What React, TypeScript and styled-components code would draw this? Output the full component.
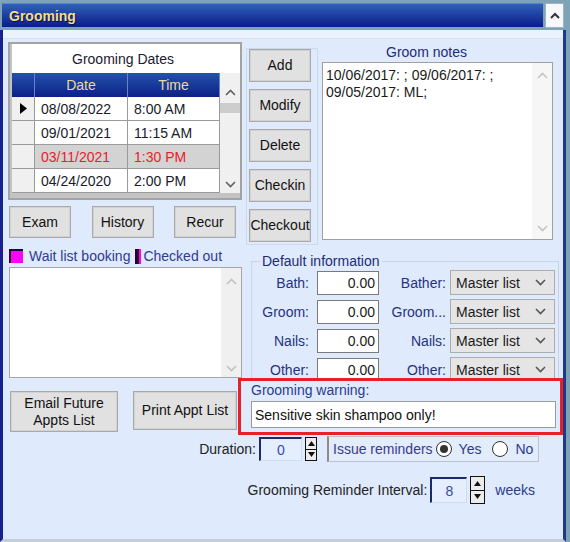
import styled, { createGlobalStyle } from "styled-components";

const GlobalStyle = createGlobalStyle`
  html, body {
    margin: 0;
    padding: 0;
    background: #7ea3b7;
  }
  body {
    font-family: "Liberation Sans", Arial, sans-serif;
    font-size: 14px;
    color: #1a1a1a;
  }
  * {
    box-sizing: border-box;
  }
`;

const NAVY = "#25337f";

const Window = styled.div`
  width: 570px;
  height: 542px;
  background: #7ea3b7;
  padding-top: 3px;
  display: flex;
  flex-direction: column;
  overflow: hidden;
`;

const TitleRow = styled.div`
  display: flex;
  height: 25px;
`;

const TitleBar = styled.div`
  width: 541px;
  height: 24px;
  margin-left: 2px;
  padding-left: 7px;
  display: flex;
  align-items: center;
  background: linear-gradient(#2f62b8, #0b1c8a);
  border-top: 1px solid #5a86cc;
  color: #f2de8e;
  font-weight: bold;
  font-size: 14px;
  text-shadow: 1px 1px 0 #0a1040;
`;

const CollapseButton = styled.div`
  width: 19px;
  height: 25px;
  margin-left: 2px;
  background: #f6f8fb;
  border: 1px solid #9fb3c4;
  display: flex;
  align-items: center;
  justify-content: center;
`;

const Body = styled.div`
  flex: 1;
  margin-top: 2px;
  margin-right: 4px;
  background: #dfeafc;
  border-left: 3px solid #16228c;
  border-right: 3px solid #1d3a8a;
  border-bottom: 3px solid #c5cdd9;
  display: flex;
  flex-direction: column;
`;

const TopStrip = styled.div`
  height: 9px;
  background: #eaf2fd;
  border-bottom: 1px solid #d6e2f2;
`;

const Upper = styled.div`
  display: flex;
  gap: 4px;
  padding: 3px 0 0 5px;
`;

const LeftCol = styled.div`
  width: 234px;
  display: flex;
  flex-direction: column;
`;

const RightCol = styled.div`
  flex: 1;
  display: flex;
  flex-direction: column;
`;

/* ---------- dates grid ---------- */

const GridFrame = styled.div`
  width: 234px;
  height: 158px;
  border: 2px solid #a3a3a3;
  background: #c3c3c3;
  padding-left: 2px;
`;

const GridTitle = styled.div`
  height: 29px;
  background: #fff;
  color: #1b2030;
  display: flex;
  align-items: center;
  justify-content: center;
  padding-right: 6px;
`;

const GridBody = styled.div`
  display: flex;
`;

const GridTable = styled.div`
  width: 208px;
  display: grid;
  grid-template-columns: 23px 93px 92px;
  grid-auto-rows: 24px;
`;

const HeadCell = styled.div`
  background: linear-gradient(#2452aa, #0c2088);
  border-right: 1px solid #6a84c0;
  color: #ead9a0;
  display: flex;
  align-items: center;
  justify-content: center;
  &:last-child {
    border-right: none;
  }
`;

const RowHeadCell = styled.div`
  background: #f0f0f0;
  border-right: 1px solid #9a9a9a;
  border-bottom: 1px solid #9a9a9a;
  display: flex;
  align-items: center;
  justify-content: center;
`;

const Cell = styled.div<{ $sel?: boolean }>`
  background: ${(p) => (p.$sel ? "#d3d3d3" : "#fff")};
  color: ${(p) => (p.$sel ? "#e8202a" : "#1a1a2a")};
  border-right: 1px solid #9a9a9a;
  border-bottom: 1px solid #9a9a9a;
  display: flex;
  align-items: center;
  padding-left: 6px;
`;

/* ---------- scrollbars ---------- */

const Scrollbar = styled.div<{ $w: number; $h: number; $pt: number; $pb: number; $bg: string }>`
  width: ${(p) => p.$w}px;
  height: ${(p) => p.$h}px;
  background: ${(p) => p.$bg};
  padding: ${(p) => p.$pt}px 0 ${(p) => p.$pb}px;
  display: flex;
  flex-direction: column;
`;

const ScrollArrow = styled.div`
  height: 17px;
  display: flex;
  align-items: center;
  justify-content: center;
`;

const Thumb = styled.div`
  height: 10px;
  margin-top: 2px;
  background: #cdcdcd;
`;

const Spacer = styled.div`
  flex: 1;
`;

function Chevron({ up, color }: { up?: boolean; color: string }) {
  return (
    <svg width="11" height="7" viewBox="0 0 11 7">
      <polyline
        points={up ? "1,6 5.5,1.5 10,6" : "1,1 5.5,5.5 10,1"}
        fill="none"
        stroke={color}
        strokeWidth="1.6"
      />
    </svg>
  );
}

function Scroll({
  w,
  h,
  pt,
  pb,
  bg,
  color,
  thumb,
}: {
  w: number;
  h: number;
  pt: number;
  pb: number;
  bg: string;
  color: string;
  thumb?: boolean;
}) {
  return (
    <Scrollbar $w={w} $h={h} $pt={pt} $pb={pb} $bg={bg}>
      <ScrollArrow>
        <Chevron up color={color} />
      </ScrollArrow>
      {thumb && <Thumb />}
      <Spacer />
      <ScrollArrow>
        <Chevron color={color} />
      </ScrollArrow>
    </Scrollbar>
  );
}

/* ---------- buttons ---------- */

const Button = styled.div<{ $w: number; $h: number }>`
  width: ${(p) => p.$w}px;
  height: ${(p) => p.$h}px;
  background: #e1e1e1;
  border: 1px solid #a9a9a9;
  box-shadow: inset 0 0 0 1px #d2d2d2;
  color: #111;
  display: flex;
  align-items: center;
  justify-content: center;
  text-align: center;
  line-height: 17px;
  flex-shrink: 0;
`;

const ExamRow = styled.div`
  margin-top: 6px;
  padding: 0 6px 0 1px;
  display: flex;
  justify-content: space-between;
`;

const LegendRow = styled.div`
  margin-top: 11px;
  height: 14px;
  padding-left: 1px;
  display: flex;
  align-items: center;
  color: #2f3a92;
`;

const WaitSwatch = styled.div`
  width: 14px;
  height: 14px;
  background: #ff00ff;
  border-top: 2px solid #2a002a;
  border-left: 2px solid #2a002a;
  margin-right: 6px;
`;

const OutSwatch = styled.div`
  width: 6px;
  height: 15px;
  background: #2a0030;
  border-right: 2px solid #ff00ff;
  margin: 0 2px 0 5px;
`;

const WaitList = styled.div`
  margin: 4px 0 0 1px;
  width: 233px;
  height: 111px;
  background: #fff;
  border: 1px solid #a6a6a6;
  display: flex;
  justify-content: flex-end;
`;

/* ---------- right side ---------- */

const TopRight = styled.div`
  display: flex;
  align-items: flex-start;
`;

const ButtonGroup = styled.div`
  width: 72px;
  margin-top: 6px;
  border: 1px solid #cbd9ec;
  padding: 0 2px 2px;
  display: flex;
  flex-direction: column;
  gap: 7px;
`;

const NotesCol = styled.div`
  width: 231px;
  margin-left: 4px;
`;

const NotesLabel = styled.div`
  height: 20px;
  line-height: 20px;
  text-align: center;
  padding-right: 22px;
  color: #1d2c78;
`;

const NotesBox = styled.div`
  height: 178px;
  background: #fff;
  border: 1px solid #a0a0a0;
  display: flex;
`;

const NotesText = styled.div`
  flex: 1;
  padding: 4px 3px;
  line-height: 17px;
  color: #1a1a1a;
`;

/* the last row runs under the warning box, as in the original form */
const DefaultGroup = styled.fieldset`
  margin: 9px 0 -7px 5px;
  width: 308px;
  padding: 0;
  border: 1px solid #c9d5e6;
  min-width: 0;
`;

const GroupLegend = styled.legend`
  margin-left: 8px;
  padding: 0 2px;
  line-height: 14px;
  color: #1d2c78;
`;

const InfoGrid = styled.div`
  display: grid;
  grid-template-columns: 65px 62px 71px 105px;
  grid-auto-rows: 29px;
  align-items: center;
`;

const InfoLabel = styled.div<{ $pr: number }>`
  text-align: right;
  padding-right: ${(p) => p.$pr}px;
  color: ${NAVY};
  white-space: nowrap;
`;

const NumberInput = styled.div`
  height: 24px;
  background: #fff;
  border: 1px solid #7a7a7a;
  display: flex;
  align-items: center;
  justify-content: flex-end;
  padding-right: 3px;
  color: #1a1a1a;
`;

const Combo = styled.div`
  height: 25px;
  background: #e5e5e5;
  border: 1px solid #acacac;
  display: flex;
  align-items: center;
  justify-content: space-between;
  padding: 0 8px 0 5px;
  color: #1a1a1a;
`;

/* ---------- bottom ---------- */

const BottomRow = styled.div`
  display: flex;
  align-items: flex-start;
  padding-left: 7px;
`;

const WarningBox = styled.div`
  position: relative;
  width: 325px;
  height: 57px;
  margin-left: 1px;
  background: #dfeafc;
  border: 3px solid #e8202a;
  padding: 2px 0 0 10px;
`;

const WarningLabel = styled.div`
  line-height: 14px;
  margin-bottom: 4px;
  color: #2c3c8c;
`;

const WarningInput = styled.div`
  width: 305px;
  height: 27px;
  background: #fff;
  border: 1px solid #9a9a9a;
  display: flex;
  align-items: center;
  padding-left: 3px;
  color: #111;
`;

const ControlRow = styled.div<{ $mt: number; $h: number; $pr: number }>`
  margin-top: ${(p) => p.$mt}px;
  height: ${(p) => p.$h}px;
  padding-right: ${(p) => p.$pr}px;
  display: flex;
  align-items: center;
  justify-content: flex-end;
`;

const PlainLabel = styled.div`
  color: #222;
`;

const SpinBox = styled.div<{ $w: number; $h: number }>`
  width: ${(p) => p.$w}px;
  height: ${(p) => p.$h}px;
  margin-left: 3px;
  background: #e4eefd;
  border-top: 2px solid #1a2a6a;
  border-left: 2px solid #1a2a6a;
  border-right: 1px solid #cfdcef;
  border-bottom: 1px solid #cfdcef;
  display: flex;
  align-items: center;
  justify-content: center;
  color: #3a48a8;
`;

const Spinner = styled.div<{ $w: number; $h: number }>`
  width: ${(p) => p.$w}px;
  height: ${(p) => p.$h}px;
  margin-left: 3px;
  border: 1px solid #111;
  background: #ececec;
  display: flex;
  flex-direction: column;
`;

const SpinHalf = styled.div`
  flex: 1;
  display: flex;
  align-items: center;
  justify-content: center;
  & + & {
    border-top: 1px solid #111;
  }
`;

const ReminderGroup = styled.div`
  width: 212px;
  height: 26px;
  margin-left: 10px;
  background: #e2ecfb;
  border: 1px solid #b9c2cf;
  border-left: 2px solid #8c8c8c;
  display: flex;
  align-items: center;
  padding-left: 4px;
  color: #3a3a8e;
`;

const Radio = styled.div`
  width: 16px;
  height: 16px;
  border-radius: 50%;
  border: 1px solid #333;
  background: #fff;
  margin: 0 7px 0 3px;
  display: flex;
  align-items: center;
  justify-content: center;
`;

const RadioDot = styled.div`
  width: 8px;
  height: 8px;
  border-radius: 50%;
  background: #333;
`;

const RadioText = styled.span<{ $mr: number }>`
  margin-right: ${(p) => p.$mr}px;
  color: #2c3c8c;
`;

const Weeks = styled.div`
  margin-left: 10px;
  color: #2c3c8c;
`;

function Spin({ w, h }: { w: number; h: number }) {
  return (
    <Spinner $w={w} $h={h}>
      <SpinHalf>
        <svg width="7" height="5" viewBox="0 0 7 5">
          <polygon points="0,5 3.5,0 7,5" fill="#111" />
        </svg>
      </SpinHalf>
      <SpinHalf>
        <svg width="7" height="5" viewBox="0 0 7 5">
          <polygon points="0,0 3.5,5 7,0" fill="#111" />
        </svg>
      </SpinHalf>
    </Spinner>
  );
}

const rows = [
  { date: "08/08/2022", time: "8:00 AM", current: true },
  { date: "09/01/2021", time: "11:15 AM" },
  { date: "03/11/2021", time: "1:30 PM", sel: true },
  { date: "04/24/2020", time: "2:00 PM" },
];

const info = [
  { a: "Bath:", b: "Bather:" },
  { a: "Groom:", b: "Groom..." },
  { a: "Nails:", b: "Nails:" },
  { a: "Other:", b: "Other:" },
];

export default function App() {
  return (
    <>
      <GlobalStyle />
      <Window>
        <TitleRow>
          <TitleBar>Grooming</TitleBar>
          <CollapseButton>
            <svg width="10" height="7" viewBox="0 0 10 7">
              <polyline points="1,6 5,2 9,6" fill="none" stroke="#333" strokeWidth="2" />
            </svg>
          </CollapseButton>
        </TitleRow>
        <Body>
          <TopStrip />
          <Upper>
            <LeftCol>
              <GridFrame>
                <GridTitle>Grooming Dates</GridTitle>
                <GridBody>
                  <GridTable>
                    <HeadCell />
                    <HeadCell>Date</HeadCell>
                    <HeadCell>Time</HeadCell>
                    {rows.map((r) => (
                      <>
                        <RowHeadCell key={r.date + "h"}>
                          {r.current && (
                            <svg width="7" height="11" viewBox="0 0 7 11">
                              <polygon points="0,0 7,5.5 0,11" fill="#000" />
                            </svg>
                          )}
                        </RowHeadCell>
                        <Cell key={r.date} $sel={r.sel}>
                          {r.date}
                        </Cell>
                        <Cell key={r.date + "t"} $sel={r.sel}>
                          {r.time}
                        </Cell>
                      </>
                    ))}
                  </GridTable>
                  <Scroll w={20} h={120} pt={11} pb={0} bg="#f0f0f0" color="#606060" thumb />
                </GridBody>
              </GridFrame>
              <ExamRow>
                <Button $w={62} $h={32}>Exam</Button>
                <Button $w={62} $h={32}>History</Button>
                <Button $w={62} $h={32}>Recur</Button>
              </ExamRow>
              <LegendRow>
                <WaitSwatch />
                Wait list booking
                <OutSwatch />
                Checked out
              </LegendRow>
              <WaitList>
                <Scroll w={20} h={109} pt={5} pb={0} bg="#f0f0f0" color="#c2c2c2" />
              </WaitList>
            </LeftCol>
            <RightCol>
              <TopRight>
                <ButtonGroup>
                  <Button $w={62} $h={33}>Add</Button>
                  <Button $w={62} $h={33}>Modify</Button>
                  <Button $w={62} $h={33}>Delete</Button>
                  <Button $w={62} $h={33}>Checkin</Button>
                  <Button $w={62} $h={33}>Checkout</Button>
                </ButtonGroup>
                <NotesCol>
                  <NotesLabel>Groom notes</NotesLabel>
                  <NotesBox>
                    <NotesText>
                      10/06/2017: ; 09/06/2017: ;
                      <br />
                      09/05/2017: ML;
                    </NotesText>
                    <Scroll w={20} h={176} pt={4} pb={2} bg="#f6f6f6" color="#c4c4c4" />
                  </NotesBox>
                </NotesCol>
              </TopRight>
              <DefaultGroup>
                <GroupLegend>Default information</GroupLegend>
                <InfoGrid>
                  {info.map((r) => (
                    <>
                      <InfoLabel key={r.a} $pr={8}>
                        {r.a}
                      </InfoLabel>
                      <NumberInput key={r.a + "i"}>0.00</NumberInput>
                      <InfoLabel key={r.b + "l"} $pr={4}>
                        {r.b}
                      </InfoLabel>
                      <Combo key={r.b + "c"}>
                        Master list
                        <Chevron color="#555" />
                      </Combo>
                    </>
                  ))}
                </InfoGrid>
              </DefaultGroup>
            </RightCol>
          </Upper>
          <BottomRow>
            <Button $w={108} $h={41} style={{ marginTop: 13 }}>
              Email Future
              <br />
              Appts List
            </Button>
            <Button $w={104} $h={39} style={{ marginTop: 13, marginLeft: 15 }}>
              Print Appt List
            </Button>
            <WarningBox>
              <WarningLabel>Grooming warning:</WarningLabel>
              <WarningInput>Sensitive skin shampoo only!</WarningInput>
            </WarningBox>
          </BottomRow>
          <ControlRow $mt={1} $h={26} $pr={24}>
            <PlainLabel>Duration:</PlainLabel>
            <SpinBox $w={43} $h={24}>0</SpinBox>
            <Spin w={12} h={24} />
            <ReminderGroup>
              Issue reminders
              <Radio>
                <RadioDot />
              </Radio>
              <RadioText $mr={8}>Yes</RadioText>
              <Radio />
              <RadioText $mr={0}>No</RadioText>
            </ReminderGroup>
          </ControlRow>
          <ControlRow $mt={13} $h={30} $pr={28}>
            <PlainLabel>Grooming Reminder Interval:</PlainLabel>
            <SpinBox $w={37} $h={26}>8</SpinBox>
            <Spin w={15} h={28} />
            <Weeks>weeks</Weeks>
          </ControlRow>
        </Body>
      </Window>
    </>
  );
}
